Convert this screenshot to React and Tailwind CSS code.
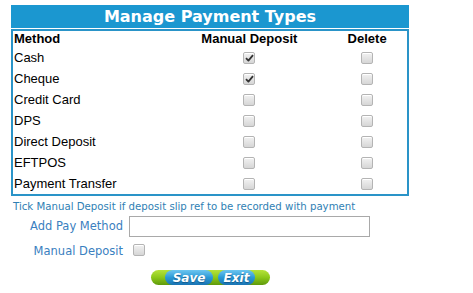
import React from 'react';

const methods = [
  { name: 'Cash', manual: true },
  { name: 'Cheque', manual: true },
  { name: 'Credit Card', manual: false },
  { name: 'DPS', manual: false },
  { name: 'Direct Deposit', manual: false },
  { name: 'EFTPOS', manual: false },
  { name: 'Payment Transfer', manual: false }
];

// greyed checkbox, the way the old browser drew it
const Box = ({ checked }) => <span className="inline-flex h-[12px] w-[12px] items-center justify-center rounded-[2px] border border-[#b4b4b4] bg-gradient-to-b from-[#f2f2f2] to-[#d6d6d6] shadow-[inset_0_1px_0_#fff]">
    {checked ? <svg width="9" height="8" viewBox="0 0 9 8">
        <path d="M1 4.2 L3.4 6.6 L8 1.2" fill="none" stroke="#333" strokeWidth="1.8" strokeLinejoin="round" />
      </svg> : null}
  </span>;

const App = () => {
  return <div className="h-[293px] w-[473px] bg-white font-['Liberation_Sans',Arial,sans-serif]">
      <div className="pl-[11px] pt-[5px]">
        {/* title bar */}
        <div className="flex h-[23px] w-[398px] items-center justify-center bg-[#1b97d0] font-['DejaVu_Sans',Verdana,sans-serif] text-[16px] font-bold text-white">
          Manage Payment Types
        </div>

        {/* list of methods */}
        <div className="mt-px w-[398px] border-2 border-[#2a94c8] text-[13px] text-black">
          <div className="flex h-[16px] items-center pl-px font-bold">
            <div className="w-[176px]">Method</div>
            <div className="w-[120px] text-center">Manual Deposit</div>
            <div className="ml-[18px] w-[80px] text-center">Delete</div>
          </div>
          {methods.map(m => <div key={m.name} className="flex h-[21px] items-center pl-px">
              <div className="w-[176px]">{m.name}</div>
              <div className="flex w-[120px] justify-center">
                <Box checked={m.manual} />
              </div>
              <div className="ml-[18px] flex w-[80px] justify-center">
                <Box />
              </div>
            </div>)}
        </div>
      </div>

      <div className="pl-[13px] pt-[3px] font-['DejaVu_Sans',Verdana,sans-serif] text-[10.2px] text-[#2f7fb4]">
        Tick Manual Deposit if deposit slip ref to be recorded with payment
      </div>

      <div className="mt-[2px] flex items-center">
        <div className="w-[123px] text-right font-['DejaVu_Sans',Verdana,sans-serif] text-[11.5px] text-[#3a80c0]">Add Pay Method</div>
        <div className="ml-[6px] h-[21px] w-[241px] border border-[#a9a9a9] bg-white" />
      </div>

      <div className="mt-[2px] flex items-center">
        <div className="w-[123px] text-right font-['DejaVu_Sans',Verdana,sans-serif] text-[11.5px] text-[#3a80c0]">Manual Deposit</div>
        <div className="ml-[10px]">
          <Box />
        </div>
      </div>

      {/* save / exit buttons on the green pill */}
      <div className="ml-[151px] mt-[12px] h-[15px] w-[119px] rounded-full bg-gradient-to-b from-[#b6e23a] via-[#8cc819] to-[#5f9a0c]">
        <div className="-mt-[5px] ml-[14px] flex gap-[5px] font-['DejaVu_Sans',Verdana,sans-serif] text-[12px] font-bold italic text-white">
          <div className="flex h-[15px] w-[48px] items-center justify-center rounded-full bg-gradient-to-b from-[#6cc6f0] via-[#2a9ad6] to-[#1a74b4] [text-shadow:0_1px_1px_#145a8c]">Save</div>
          <div className="flex h-[15px] w-[37px] items-center justify-center rounded-full bg-gradient-to-b from-[#6cc6f0] via-[#2a9ad6] to-[#1a74b4] [text-shadow:0_1px_1px_#145a8c]">Exit</div>
        </div>
      </div>
    </div>;
};

export default App;
